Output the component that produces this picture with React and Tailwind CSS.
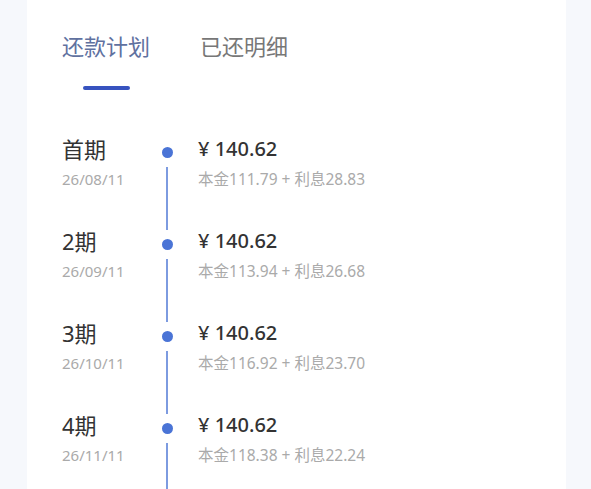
import React from 'react';

const plans = [
  { title: '首期', date: '26/08/11', amount: '140.62', principal: '111.79', interest: '28.83' },
  { title: '2期', date: '26/09/11', amount: '140.62', principal: '113.94', interest: '26.68' },
  { title: '3期', date: '26/10/11', amount: '140.62', principal: '116.92', interest: '23.70' },
  { title: '4期', date: '26/11/11', amount: '140.62', principal: '118.38', interest: '22.24' },
];

const font = { fontFamily: '"Noto Sans", "Noto Sans CJK SC", sans-serif' };

function PlanRow({ item }) {
  return (
    <div className="flex h-[92px]">
      <div className="w-[94px] shrink-0">
        <div className="text-[22px] leading-[22px] text-[#333]">{item.title}</div>
        <div className="mt-[10px] text-[15px] leading-[18px] text-[#aaa]">{item.date}</div>
      </div>
      <div className="flex w-[22px] shrink-0 flex-col items-center pt-[9px]">
        <div className="h-[11px] w-[11px] rounded-full bg-[#4a74d6]"></div>
        <div className="mt-[9px] w-[1.5px] flex-1 bg-[#7d9be0]"></div>
      </div>
      <div className="ml-[20px]">
        <div className="text-[20px] font-medium leading-[22px] text-[#333]">¥ {item.amount}</div>
        <div className="mt-[10px] text-[15.5px] leading-[18px] text-[#aaa]">
          本金{item.principal} + 利息{item.interest}
        </div>
      </div>
    </div>
  );
}

export default function App() {
  return (
    <div className="h-[489px] w-[591px] overflow-hidden bg-[#f6f8fc]" style={font}>
      <div className="ml-[27px] h-full w-[539px] bg-white pl-[35px]">
        <div className="flex gap-[50px] pt-[34px]">
          <div className="flex flex-col items-center">
            <span className="text-[22px] leading-[24px] text-[#60719f]">还款计划</span>
            <div className="mt-[28px] h-[4px] w-[47px] rounded-sm bg-[#3753bf]"></div>
          </div>
          <span className="text-[22px] leading-[24px] text-[#777]">已还明细</span>
        </div>
        <div className="mt-[48px]">
          {plans.map((p) => (
            <PlanRow key={p.title} item={p} />
          ))}
        </div>
      </div>
    </div>
  );
}
